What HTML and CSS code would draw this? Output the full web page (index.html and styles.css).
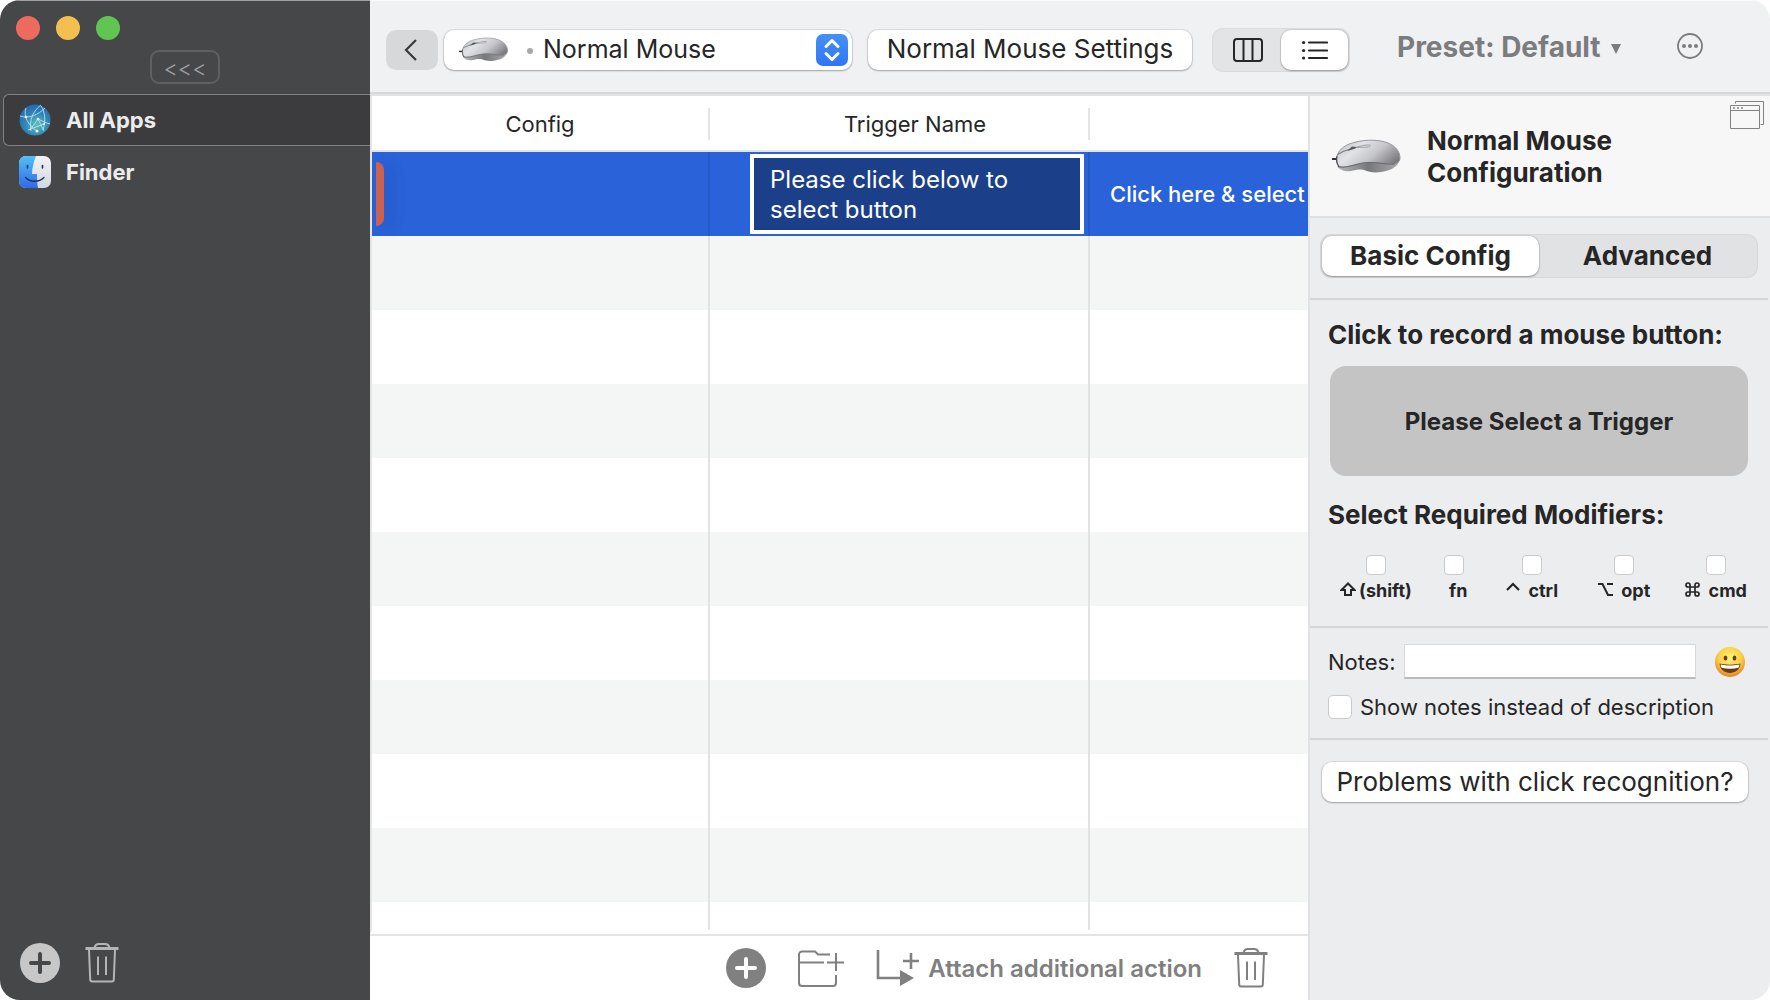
FILE: index.html
```html
<!DOCTYPE html>
<html lang="en">
<head>
<meta charset="utf-8">
<title>Normal Mouse</title>
<link rel="stylesheet" href="styles.css">
</head>
<body>
<svg class="defs" aria-hidden="true">
  <defs>
    <linearGradient id="shell" x1="0" y1="0.2" x2="1" y2="0.7">
      <stop offset="0" stop-color="#c2c3c7"/><stop offset="0.3" stop-color="#e2e3e6"/><stop offset="0.6" stop-color="#c6c6ca"/><stop offset="1" stop-color="#77777b"/>
    </linearGradient>
    <linearGradient id="base" x1="0" y1="0" x2="1" y2="0">
      <stop offset="0" stop-color="#b9babd"/><stop offset="0.5" stop-color="#77787b"/><stop offset="1" stop-color="#a8a8ab"/>
    </linearGradient>
    <symbol id="mouse" viewBox="0 0 70 36">
      <path d="M0 20h5" stroke="#333" stroke-width="2"/>
      <path d="M5 27c2 4 8 6 14 5 5-1 8-2 13-1 5 2 10 3 17 2 8-1 15-4 18-10L38 21z" fill="url(#base)"/>
      <path d="M5 17C7 10 14 5 24 3 34 .5 48 .5 56 4c7 3 12 8 12 15 0 4-3 6-8 6-9 0-14-2-24-1.500C24 24 16 29 9 28c-4-1-5-6-4-11z" fill="url(#shell)" stroke="#98999d" stroke-width="1"/>
      <path d="M7 28c11 1 18-4 29-4.500 10-.5 18 2.500 27 1.500" stroke="#68686b" stroke-width="1" fill="none"/>
      <path d="M5.500 15.500C11 12 22 8 38 6.500" stroke="#77787b" stroke-width="1.200" fill="none"/>
      <path d="M15 12l5-4.500 5 .5-3 2z" fill="#5a5b5e"/>
      <path d="M24 8.500C29 6.500 34 5.700 38 6c1 1.500-1 2-3 2.300z" fill="#d3d4d7" stroke="#9a9b9f" stroke-width=".8"/>
      <path d="M5 17c-1 4 0 8 2 11" stroke="#4b4b4e" stroke-width="1.200" fill="none"/>
    </symbol>
    <symbol id="trash" viewBox="0 0 34 40">
      <path d="M0.500 5.500h33" stroke="currentColor" stroke-width="3"/>
      <path d="M9.500 4.500c1-3 2-3.500 4-3.500h7c2 0 3 .5 4 3.500M4 7l1.200 29.500c0 1.500 1 2 2 2h19.600c1 0 2-.5 2-2L30 7M13 13.500v18.500M21 13.500v18.500" fill="none" stroke="currentColor" stroke-width="2"/>
    </symbol>
  </defs>
</svg>
<div class="window">
  <aside class="sidebar">
    <div class="lights">
      <button class="light light-close" aria-label="Close"></button>
      <button class="light light-min" aria-label="Minimize"></button>
      <button class="light light-zoom" aria-label="Zoom"></button>
    </div>
    <button class="collapse">&lt;&lt;&lt;</button>
    <nav class="apps">
      <a class="app app-selected" href="#all">
        <svg class="app-icon" viewBox="0 0 32 32" aria-hidden="true">
          <defs><radialGradient id="globe" cx=".55" cy=".65" r=".65"><stop offset="0" stop-color="#5cc0bd"/><stop offset=".55" stop-color="#3488b4"/><stop offset="1" stop-color="#2468b5"/></radialGradient></defs>
          <circle cx="16" cy="16" r="15.500" fill="url(#globe)"/>
          <g fill="none" stroke="#c5ebf5" stroke-width=".8"><path d="M1 12C10 15 19 11 26 4M7 4c-3 8 2 17 11 23M22 1C14 7 10 16 12 27M19 15c4 2 8 4 12 5M19 15l-8 11M19 15l6 12M22 2c4 6 5 14 2 24M9 26l16-6"/></g>
          <g fill="#e9fbff"><circle cx="7" cy="13" r="1.300"/><circle cx="19" cy="15" r="1.300"/><circle cx="18" cy="27" r="1.500"/><circle cx="25" cy="20" r="1"/></g>
        </svg>
        <span>All Apps</span>
      </a>
      <a class="app" href="#finder">
        <svg class="app-icon" viewBox="0 0 32 32" aria-hidden="true">
          <defs><linearGradient id="fb" x1="0" y1="0" x2="0" y2="1"><stop offset="0" stop-color="#52c0f8"/><stop offset="1" stop-color="#3169e8"/></linearGradient><linearGradient id="fw" x1="0" y1="0" x2="0" y2="1"><stop offset="0" stop-color="#f2f2f4"/><stop offset="1" stop-color="#d3d8e2"/></linearGradient></defs>
          <rect width="32" height="32" rx="7" fill="url(#fw)"/>
          <path d="M7 0h10c-2 5-4 12-4 18h5c0 5 0 9 1 14H7a7 7 0 0 1-7-7V7a7 7 0 0 1 7-7z" fill="url(#fb)"/>
          <path d="M8.500 9.500v2.500M23.500 9.500v2.500" stroke="#1c3350" stroke-width="1.600" stroke-linecap="round"/>
          <path d="M6.500 21.500c5 5 13.500 5 18.500 0" stroke="#1c3350" stroke-width="1.300" fill="none" stroke-linecap="round"/>
        </svg>
        <span>Finder</span>
      </a>
    </nav>
    <div class="sidebar-tools">
      <button class="tool" aria-label="Add app"><svg width="40" height="40" viewBox="0 0 40 40"><circle cx="20" cy="20" r="20" fill="#c7c7c8"/><path d="M11 20h18M20 11v18" stroke="#464749" stroke-width="4" stroke-linecap="round"/></svg></button>
      <button class="tool tool-light" aria-label="Delete app"><svg width="34" height="40"><use href="#trash"/></svg></button>
    </div>
  </aside>

  <div class="content">
    <header class="toolbar">
      <button class="back" aria-label="Back"><svg width="16" height="24" viewBox="0 0 16 24"><path d="M12 2 2 12l10 10" fill="none" stroke="#3a3a3c" stroke-width="2.200"/></svg></button>
      <div class="device">
        <svg class="device-mouse" width="50" height="26" aria-hidden="true"><use href="#mouse"/></svg>
        <span class="device-dot"></span>
        <select class="device-select" aria-label="Device"><option>Normal Mouse</option></select>
        <svg class="device-arrows" width="32" height="32" viewBox="0 0 32 32" aria-hidden="true"><defs><linearGradient id="blue" x1="0" y1="0" x2="0" y2="1"><stop offset="0" stop-color="#4490f8"/><stop offset="1" stop-color="#3076f5"/></linearGradient></defs><rect width="32" height="32" rx="7" fill="url(#blue)"/><path d="m10 12.500 6-6 6 6M10 19.500l6 6 6-6" fill="none" stroke="#fff" stroke-width="3" stroke-linecap="round" stroke-linejoin="round"/></svg>
      </div>
      <button class="push settings">Normal Mouse Settings</button>
      <div class="views">
        <button class="view" aria-label="Columns"><svg width="30" height="24" viewBox="0 0 30 24"><rect x="1" y="1" width="28" height="22" rx="3" fill="none" stroke="#262626" stroke-width="2"/><path d="M10.500 1v22M19.500 1v22" stroke="#262626" stroke-width="2"/></svg></button>
        <button class="view view-on" aria-label="List"><svg width="26" height="20" viewBox="0 0 26 20"><path d="M7 2.500h18M7 10.500h18M7 18h18" stroke="#262626" stroke-width="2.200" stroke-linecap="round"/><g fill="#262626"><circle cx="1.600" cy="2.500" r="1.600"/><circle cx="1.600" cy="10.500" r="1.600"/><circle cx="1.600" cy="18" r="1.600"/></g></svg></button>
      </div>
      <button class="preset" aria-haspopup="menu">Preset: Default <svg width="10" height="14" viewBox="0 0 10 14" aria-hidden="true"><path d="M0 4h10L5 14z" fill="currentColor"/></svg></button>
      <button class="more" aria-label="More"><svg width="26" height="26" viewBox="0 0 26 26"><circle cx="13" cy="13" r="12" fill="none" stroke="currentColor" stroke-width="1.800"/><g fill="currentColor"><circle cx="7" cy="13" r="2"/><circle cx="13" cy="13" r="2"/><circle cx="19" cy="13" r="2"/></g></svg></button>
    </header>

    <div class="panes">
      <main class="main">
        <div class="table-clip">
          <table class="triggers">
            <colgroup><col class="col-config"><col class="col-name"><col></colgroup>
            <thead><tr><th scope="col"><span>Config</span></th><th scope="col"><span class="name-head">Trigger Name</span></th><th scope="col"><span></span></th></tr></thead>
            <tbody>
              <tr class="row-on">
                <td><span class="marker"></span></td>
                <td class="name-cell"><div class="name-box">Please click below to select button</div></td>
                <td class="action-cell">Click here &amp; select</td>
              </tr>
              <tr><td></td><td></td><td></td></tr>
              <tr><td></td><td></td><td></td></tr>
              <tr><td></td><td></td><td></td></tr>
              <tr><td></td><td></td><td></td></tr>
              <tr><td></td><td></td><td></td></tr>
              <tr><td></td><td></td><td></td></tr>
              <tr><td></td><td></td><td></td></tr>
              <tr><td></td><td></td><td></td></tr>
              <tr><td></td><td></td><td></td></tr>
              <tr><td></td><td></td><td></td></tr>
            </tbody>
          </table>
        </div>
        <footer class="actions">
          <button class="tool" aria-label="Add trigger"><svg width="40" height="40" viewBox="0 0 40 40"><circle cx="20" cy="20" r="20" fill="#808080"/><path d="M11 20h18M20 11v18" stroke="#fff" stroke-width="4" stroke-linecap="round"/></svg></button>
          <button class="tool" aria-label="Add group"><svg width="46" height="38" viewBox="0 0 46 38"><path d="M32 5.500H20l-3-3H4a3 3 0 0 0-3 3V34a3 3 0 0 0 3 3h31a3 3 0 0 0 3-3v-8M1 13.500h25M29 13.500h17M38 4v18" fill="none" stroke="currentColor" stroke-width="2"/></svg></button>
          <button class="tool attach"><svg width="44" height="38" viewBox="0 0 44 38" aria-hidden="true"><path d="M2 1v28h24M27 12h16M35 4v16" fill="none" stroke="currentColor" stroke-width="2.600"/><path d="m24 21 14 8-14 8z" fill="currentColor"/></svg><span>Attach additional action</span></button>
          <button class="tool" aria-label="Delete trigger"><svg width="34" height="40"><use href="#trash"/></svg></button>
        </footer>
      </main>

      <aside class="inspector">
        <header class="inspector-head">
          <svg class="inspector-mouse" width="70" height="36" aria-hidden="true"><use href="#mouse"/></svg>
          <h1 class="title">Normal Mouse Configuration</h1>
          <button class="detach" aria-label="Open in window"><svg width="34" height="28" viewBox="0 0 34 28"><path d="M.5 4.500h29v23H.5zM.5 9.500h29M5.500 2.500v-2h28v23h-3" fill="none" stroke="#828282"/><path d="M3 7h2M7 7h2M11 7h2" stroke="#828282" stroke-width="1.500"/></svg></button>
        </header>
        <section class="block tabs-block">
          <div class="tabs">
            <button class="tab tab-on">Basic Config</button>
            <button class="tab">Advanced</button>
          </div>
        </section>
        <section class="block trigger-block">
          <h2 class="heading">Click to record a mouse button:</h2>
          <button class="record">Please Select a Trigger</button>
          <h2 class="heading">Select Required Modifiers:</h2>
          <div class="mods">
            <label class="mod"><input class="check" type="checkbox"><span><svg width="16" height="15" viewBox="0 0 16 15" aria-hidden="true"><path d="M8 1.500 1.500 8H5v5h6V8h3.500z" fill="none" stroke="currentColor" stroke-width="2"/></svg><span class="after-arrow">(shift)</span></span></label>
            <label class="mod"><input class="check" type="checkbox"><span>&nbsp;&nbsp;fn</span></label>
            <label class="mod"><input class="check" type="checkbox"><span><svg width="14" height="15" viewBox="0 0 14 15" aria-hidden="true"><path d="m1 8 6-6 6 6" fill="none" stroke="currentColor" stroke-width="2.200"/></svg>&nbsp; ctrl</span></label>
            <label class="mod"><input class="check" type="checkbox"><span><svg width="15" height="15" viewBox="0 0 15 15" aria-hidden="true"><path d="M0 2h4.500L10 13h5M9 2h6" fill="none" stroke="currentColor" stroke-width="2"/></svg>&nbsp; opt</span></label>
            <label class="mod"><input class="check" type="checkbox"><span><svg width="15" height="15" viewBox="0 0 15 15" aria-hidden="true"><path d="M5 5h5v5H5zM5 5V3a2 2 0 1 0-2 2h2M10 5V3a2 2 0 1 1 2 2h-2M5 10v2a2 2 0 1 1-2-2h2M10 10v2a2 2 0 1 0 2-2h-2" fill="none" stroke="currentColor" stroke-width="1.700"/></svg>&nbsp; cmd</span></label>
          </div>
        </section>
        <section class="block notes-block">
          <div class="notes">
            <label for="notes">Notes:</label>
            <input id="notes" class="notes-input" type="text">
            <button class="tool" aria-label="Emoji"><svg width="32" height="32" viewBox="0 0 32 32"><defs><radialGradient id="face" cx=".5" cy=".35" r=".65"><stop offset="0" stop-color="#fff37a"/><stop offset=".6" stop-color="#fbce45"/><stop offset="1" stop-color="#df8226"/></radialGradient></defs><circle cx="16" cy="16" r="15" fill="url(#face)"/><ellipse cx="11.500" cy="12" rx="1.900" ry="2.500" fill="#6c3b12"/><ellipse cx="20.500" cy="12" rx="1.900" ry="2.500" fill="#6c3b12"/><path d="M5.500 17.500c6 1.500 15 1.500 21 0-.5 6-5 9.500-10.500 9.500S6 23.500 5.500 17.500z" fill="#6b3d17"/><path d="M6.500 18.500c6 1.200 13 1.200 19 0-.2 1.500-.6 2.500-1.200 3.300-5 1.200-11.600 1.200-16.600 0-.6-.8-1-1.800-1.200-3.300z" fill="#fff"/></svg></button>
          </div>
          <label class="show-notes"><input class="check check-big" type="checkbox"><span>Show notes instead of description</span></label>
        </section>
        <section class="problems">
          <button class="push problems-button">Problems with click recognition?</button>
        </section>
      </aside>
    </div>
  </div>
</div>
</body>
</html>
```
FILE: styles.css
```css
* { box-sizing: border-box; }

body {
  margin: 0;
  background: #fff;
  color: #262626;
  font-family: Inter, "Liberation Sans", sans-serif;
  font-size: 22px;
}

button, input, select { font: inherit; color: inherit; }

button {
  display: flex;
  align-items: center;
  justify-content: center;
  margin: 0;
  padding: 0;
  border: 0;
  background: none;
}

svg { display: block; flex: none; }
.defs { position: absolute; width: 0; height: 0; }

.window {
  display: flex;
  height: 100vh;
  border-radius: 20px;
  overflow: hidden;
  background: #fff;
}

/* Sidebar */
.sidebar {
  display: flex;
  flex: none;
  flex-direction: column;
  width: 370px;
  border-top: 1px solid #a0a1a2;
  background: #464749;
  color: #ececec;
}

.lights { display: flex; gap: 16px; padding: 15px 16px 10px; }
.light { width: 24px; height: 24px; border-radius: 50%; }
.light-close { background: #ed6a5e; }
.light-min { background: #f5bf4f; }
.light-zoom { background: #61c554; }

.collapse {
  width: 70px;
  height: 34px;
  margin: 0 0 10px 150px;
  padding-top: 2px;
  border: 2px solid #5f6061;
  border-radius: 9px;
  color: #a0a0a1;
  font-size: 22px;
  font-weight: 300;
}

.apps { padding-left: 3px; }

.app {
  display: flex;
  align-items: center;
  gap: 15px;
  height: 52px;
  padding-left: 15px;
  border: 1px solid transparent;
  border-right: 0;
  color: inherit;
  font-weight: 700;
  text-decoration: none;
}

.app-selected {
  border-color: #818283;
  border-radius: 6px 0 0 6px;
  background: #3c3c3e;
}

.app-icon { width: 32px; height: 32px; }

.sidebar-tools {
  display: flex;
  align-items: center;
  gap: 25px;
  margin-top: auto;
  padding: 0 20px 17px;
}

.tool { color: #808080; }
.tool-light { color: #b5b5b6; }

/* Toolbar */
.content { display: flex; flex: 1; flex-direction: column; min-width: 0; }

.toolbar {
  display: flex;
  flex: none;
  align-items: center;
  height: 96px;
  padding: 6px 16px 0;
  border-top: 1px solid #fafafa;
  border-bottom: 2px solid #e2e3e4;
  box-shadow: inset 0 -2px #d6d7d9;
  background: #f0f1f3;
  font-size: 25px;
}

.toolbar > * { margin-bottom: 2px; }

.back { width: 52px; height: 40px; border-radius: 10px; background: #d7d8da; }

.push, .device, .view-on, .tab-on {
  border-radius: 10px;
  background: #fff;
  box-shadow: 0 0 0 1px #00000014, 0 1px 2px #00000044;
}

.device { position: relative; flex: none; width: 408px; height: 40px; margin-left: 6px; }

.device-select {
  width: 100%;
  height: 100%;
  padding: 0 48px 2px 99px;
  border: 0;
  background: none;
  appearance: none;
}

.device-mouse { position: absolute; top: 7px; left: 15px; pointer-events: none; }
.device-arrows { position: absolute; top: 4px; right: 4px; pointer-events: none; }

.device-dot {
  position: absolute;
  top: 18px;
  left: 83px;
  width: 6px;
  height: 6px;
  border-radius: 50%;
  background: #a9a9a9;
}

.push { height: 40px; padding-bottom: 2px; font-size: 26px; white-space: nowrap; }
.settings { width: 324px; margin-left: 16px; }

.views {
  display: flex;
  flex: none;
  width: 138px;
  height: 44px;
  margin-left: 20px;
  padding: 2px;
  border-radius: 11px;
  background: #e3e4e6;
  box-shadow: inset 0 0 0 1px #0000000a;
}

.view { flex: 1; height: 40px; }

.preset {
  gap: 10px;
  margin: 0 0 8px 47px;
  color: #7b7c7e;
  font-size: 28px;
  font-weight: 700;
  white-space: nowrap;
}

.more { margin: 0 0 10px 56px; color: #7b7c7e; }

/* Trigger table */
.panes { display: flex; flex: 1; min-height: 0; }

.main {
  display: flex;
  flex: 1;
  flex-direction: column;
  min-width: 0;
  border-right: 2px solid #e1e2e3;
}

.table-clip {
  flex: 1;
  min-height: 0;
  overflow: hidden;
  border-bottom: 4px solid #fff;
  border-left: 2px solid #e4e4e5;
}

.triggers { width: 100%; table-layout: fixed; border-collapse: separate; border-spacing: 0; }
.col-config { width: 338px; }
.col-name { width: 380px; }

th { height: 56px; padding: 2px 0 0; border-bottom: 2px solid #e4e4e5; font-weight: 400; }
th span { display: flex; align-items: center; justify-content: center; height: 32px; border-right: 2px solid #e4e4e5; }
th:last-child span { border: 0; }
.name-head { padding-left: 32px; }

td { height: 74px; padding: 0; border-right: 2px solid #e2e2e2; }
td:last-child { border-right: 0; }
tbody tr:nth-child(even) td { background: #f4f6f5; background-clip: padding-box; }

.row-on td { height: 84px; border-color: #2459c8; background: #2962d9; color: #fff; }

.marker {
  display: block;
  width: 8px;
  height: 64px;
  margin-left: 4px;
  border-radius: 0 8px 8px 0;
  background: #c9634f;
  box-shadow: 8px 2px 16px #0000001f;
}

.row-on .name-cell { padding: 0 4px 0 40px; }

.name-box {
  height: 80px;
  padding: 7px 16px;
  border: 4px solid #fff;
  background: #1c3f8a;
  font-size: 24px;
  line-height: 30px;
}

.row-on .action-cell { padding-left: 20px; overflow: hidden; font-weight: 500; white-space: nowrap; }

.actions {
  display: flex;
  flex: none;
  align-items: center;
  justify-content: flex-end;
  gap: 32px;
  height: 66px;
  padding-right: 40px;
  border-top: 2px solid #e4e4e5;
}

.attach { gap: 8px; font-size: 24px; font-weight: 600; white-space: nowrap; }

/* Inspector */
.inspector {
  display: flex;
  flex: none;
  flex-direction: column;
  width: 460px;
  background: #ecedef;
}

.inspector-head {
  position: relative;
  display: flex;
  align-items: center;
  gap: 25px;
  height: 122px;
  padding: 2px 22px 0;
  border-bottom: 2px solid #dedfe0;
  background: #f7f7f7;
}

.title { margin: 0; font-size: 26px; font-weight: 700; line-height: 32px; }
.detach { position: absolute; top: 5px; right: 6px; }

.block { margin-right: 2px; border-bottom: 2px solid #d5d6d8; }
.tabs-block { padding: 16px 10px 20px; }

.tabs {
  display: flex;
  height: 44px;
  padding: 2px;
  border-radius: 11px;
  background: #e1e2e4;
  box-shadow: inset 0 0 0 1px #0000000a;
}

.tab { flex: 1; padding-bottom: 2px; font-size: 26px; font-weight: 700; }

.trigger-block { padding: 18px 18px 24px; }
.heading { margin: 0; font-size: 26px; font-weight: 700; line-height: 34px; white-space: nowrap; }

.record {
  width: 418px;
  height: 110px;
  margin: 14px 0 22px 2px;
  border-radius: 16px;
  background: #c4c4c4;
  font-size: 24px;
  font-weight: 700;
}

.mods {
  display: grid;
  grid-template-columns: 78px 78px 78px 106px 78px;
  margin: 23px 0 0 9px;
}

.mod {
  display: flex;
  flex-direction: column;
  align-items: center;
  gap: 5px;
  font-size: 18px;
  font-weight: 700;
  line-height: 22px;
  white-space: nowrap;
}

.mod svg { display: inline-block; }
.after-arrow { margin-left: 3px; }

.check {
  flex: none;
  width: 20px;
  height: 20px;
  margin: 0;
  border: 1px solid #c9cacc;
  border-radius: 4px;
  background: #fff;
  appearance: none;
}

.check-big { width: 24px; height: 24px; border-radius: 5px; }

.notes-block { padding: 16px 22px 18px 18px; }
.notes { display: flex; align-items: center; gap: 8px; }
.notes .tool { margin-left: 10px; }

.notes-input {
  flex: 1;
  min-width: 0;
  height: 35px;
  padding: 0 6px;
  border: 1px solid #d8d9db;
  border-bottom: 2px solid #b9babc;
  background: #fff;
}

.show-notes { display: flex; align-items: center; gap: 8px; margin-top: 15px; white-space: nowrap; }

.problems { padding: 22px 22px 22px 12px; }
.problems-button { width: 100%; }
```
